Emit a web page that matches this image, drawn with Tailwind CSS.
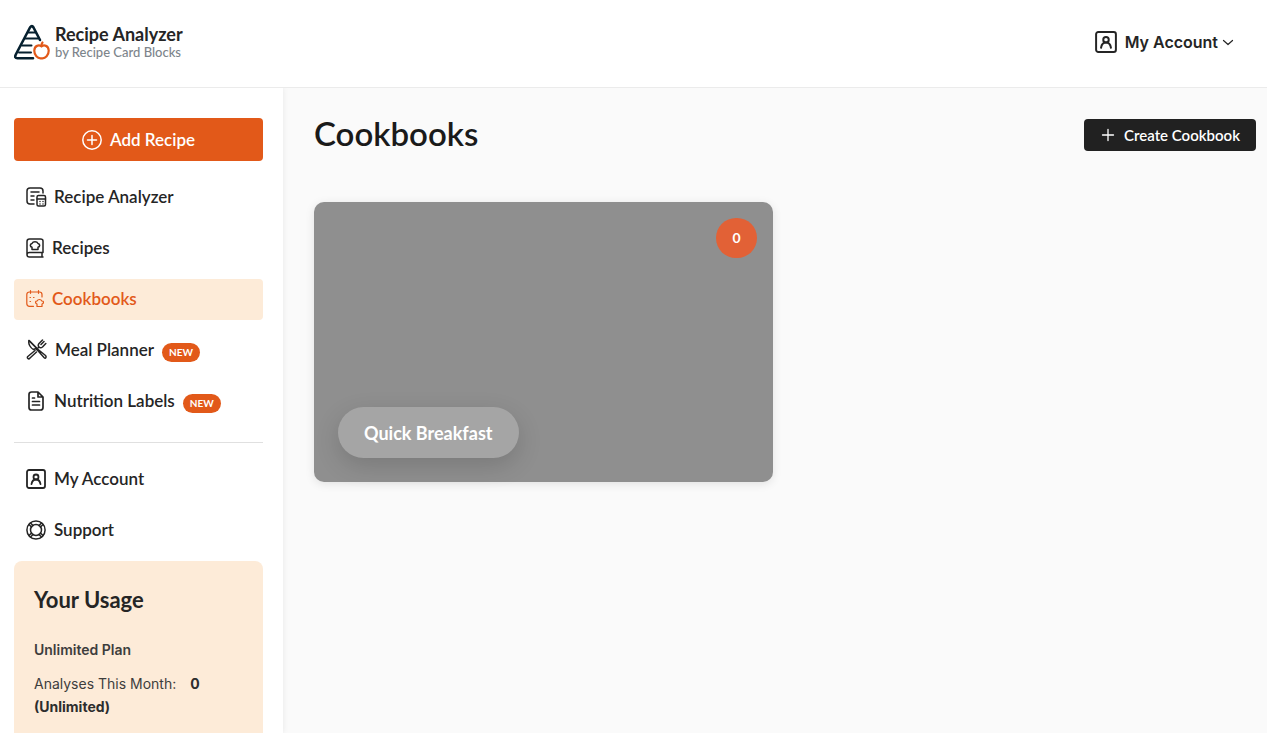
<!DOCTYPE html>
<html lang="en">

<head>
    <meta charset="UTF-8">
    <meta name="viewport" content="width=device-width, initial-scale=1.0">
    <title>Cookbooks - Recipe Analyzer</title>
    <script src="https://cdn.jsdelivr.net/npm/@tailwindcss/browser@4"></script>
</head>

<body class="flex flex-col min-h-screen bg-white text-[#252525] font-['Lato','Liberation_Sans',sans-serif]">
    <header class="flex items-center justify-between h-22 pl-[14px] pr-[33px] pb-[3px] border-b border-[#ebebeb]">
        <a href="#" class="flex items-center gap-[5px]">
            <svg class="w-9 h-9" viewBox="0 0 36 36" fill="none" stroke="#06202f" stroke-width="2.6" stroke-linecap="round" stroke-linejoin="round">
                <path d="M26 16 19.500 3.500Q18 .8 16 3.500L1.800 30.500Q0 34.200 3.500 34.200H19" />
                <path d="M14.500 8.500H21M11 14.500H24M8 21.500H17.500M5 28.500H17" stroke-width="2" />
                <g stroke="#e25919" stroke-width="2.2">
                    <path d="M27.500 22.500C25 20.500 20.600 21.500 20.300 26.500 20.200 31 23.500 35 27.500 34.300 31.500 35 34.800 31 34.700 26.500 34.400 21.500 30 20.500 27.500 22.500Z" />
                    <path d="M27.500 22Q27.300 20 28.500 18.500" />
                </g>
            </svg>
            <span>
                <span class="block text-lg leading-5 font-bold">Recipe Analyzer</span>
                <span class="block text-[13px] leading-4 font-medium text-[#7d858b]">by Recipe Card Blocks</span>
            </span>
        </a>
        <button type="button" class="flex items-center gap-1 font-['Inter',sans-serif] text-base font-semibold">
            <svg class="w-[22px] h-[22px] mr-1" viewBox="2 2 20 20" fill="none" stroke="currentColor" stroke-width="1.800" stroke-linecap="round">
                <rect x="3" y="3" width="18" height="18" rx="2" />
                <circle cx="12" cy="10" r="2.500" />
                <path d="M7.500 17.200C8 14.200 9.500 12.500 12 12.500S16 14.200 16.500 17.200" />
            </svg>
            My Account
            <svg class="w-3 h-3" viewBox="0 0 12 12" fill="none" stroke="currentColor" stroke-width="1.200" stroke-linecap="round" stroke-linejoin="round">
                <path d="M1.500 4.500 6 8.500 10.500 4.500" />
            </svg>
        </button>
    </header>

    <div class="flex flex-1">
        <aside class="flex flex-col w-[283px] shrink-0 pl-[14px] pr-5 pt-[30px] shadow-[0_0_6px_rgba(0,0,0,0.08)] z-10 [clip-path:inset(0_-8px_0_0)]">
            <button type="button" class="flex items-center justify-center gap-2 h-[43px] mb-4 rounded bg-[#e25919] text-white text-[17px] font-semibold">
                <svg class="w-5 h-5" viewBox="0 0 20 20" fill="none" stroke="currentColor" stroke-width="1.500" stroke-linecap="round">
                    <circle cx="10" cy="10" r="9.200" />
                    <path d="M10 5.500V14.500M5.500 10H14.500" />
                </svg>
                Add Recipe
            </button>

            <nav class="flex flex-col gap-[10px] pb-5 border-b border-[#e0e0e0] text-[17px] font-semibold">
                <a href="#" class="flex items-center gap-[7px] h-[41px] px-3 pb-[2px] rounded">
                    <svg class="w-[21px] h-5" viewBox="0 0 21 20" fill="none" stroke="currentColor" stroke-width="1.500" stroke-linecap="round" stroke-linejoin="round">
                        <path d="M8 17H4Q1 17 1 14V4Q1 1 4 1H14Q17 1 17 4V6M5 5H13M5 9H8M5 13H8" />
                        <rect x="11" y="8.500" width="8.500" height="10.500" rx="1.500" />
                        <path d="M11 12H19.500M14 14.500V14.600M17 14.500V14.600M14 17V17.100M17 17V17.100" />
                    </svg>
                    Recipe Analyzer
                </a>
                <a href="#" class="flex items-center gap-2 h-[41px] px-3 pb-[2px] rounded">
                    <svg class="w-[18px] h-5" viewBox="0 0 18 20" fill="none" stroke="currentColor" stroke-width="1.500" stroke-linecap="round" stroke-linejoin="round">
                        <path d="M17 19H3.500Q1 19 1 16.700V3.500Q1 1 3.500 1H14.500Q17 1 17 3V14.500H3.500Q1 14.500 1 16.700M16 15V18.500" />
                        <path d="M6 11.500V9.300C4 8.700 3.500 6 6 5.500 7 3.300 11 3.300 12 5.500 14.500 6 14 8.700 12 9.300V11.500Z" />
                    </svg>
                    Recipes
                </a>
                <a href="#" aria-current="page" class="flex items-center gap-2 h-[41px] px-3 pb-[2px] rounded bg-[#fdebd8] text-[#e25919]">
                    <svg class="w-[18px] h-[18px]" viewBox="0 0 18 18" fill="none" stroke="currentColor" stroke-width="1.200" stroke-linecap="round" stroke-linejoin="round">
                        <path d="M7.500 16.300H3.500Q.8 16.300 .8 13.500V4.500Q.8 2 3.500 2H13.500Q16 2 16 4.500V7M4.500 .7V3.300M12.500 .7V3.300M4 7.500H4.500M7.500 7.500H8M4 11.500H4.500" />
                        <path d="M11 16.500V14C8.800 13.300 9.500 10.800 11 11 12 9 15 9 15.800 11 18 10.800 18 13.500 16 14V16.500Z" />
                    </svg>
                    Cookbooks
                </a>
                <a href="#" class="flex items-center gap-2 h-[41px] px-3 pb-[2px] rounded">
                    <svg class="w-[21px] h-[21px]" viewBox="0 0 21 21" fill="none" stroke="currentColor" stroke-width="1.500" stroke-linecap="round" stroke-linejoin="round">
                        <path d="M3 1.500C2 5 4.500 9 7.500 10.500L10 9.500 18 18.500Q19.500 20 20 18.200 20.300 17.500 19.500 16.500L11.500 10Z" />
                        <path d="M3 1.500 11.500 10M16.500 1 13 4.500Q11.500 6.500 13 8L10.500 10.500M18 2.500 15 5.500M19.800 4.500 16.500 8Q14.500 9.500 13 8M9 11.500 1.800 17.500Q.8 19 2 19.700 3 20.300 4 19L10.500 13" />
                    </svg>
                    Meal Planner
                    <span class="flex items-center h-[19px] px-[7px] mt-[5px] rounded-full bg-[#e25919] text-white text-[10px] font-bold">NEW</span>
                </a>
                <a href="#" class="flex items-center gap-2 h-[41px] px-3 pb-[2px] rounded">
                    <svg class="w-5 h-5" viewBox="0 0 20 20" fill="none" stroke="currentColor" stroke-width="1.700" stroke-linecap="round" stroke-linejoin="round">
                        <path d="M12 1H5.500Q3 1 3 3.500V16.500Q3 19 5.500 19H14.500Q17 19 17 16.500V6ZV6H17M6.500 7H8.500M6.500 10.500H13.500M6.500 14H13.500" />
                    </svg>
                    Nutrition Labels
                    <span class="flex items-center h-[19px] px-[7px] mt-[5px] rounded-full bg-[#e25919] text-white text-[10px] font-bold">NEW</span>
                </a>
            </nav>

            <nav class="flex flex-col gap-[10px] pt-4 mb-[10px] text-[17px] font-semibold">
                <a href="#" class="flex items-center gap-2 h-[41px] px-3 pb-[2px] rounded">
                    <svg class="w-5 h-5" viewBox="2 2 20 20" fill="none" stroke="currentColor" stroke-width="1.800" stroke-linecap="round">
                        <rect x="3" y="3" width="18" height="18" rx="2" />
                        <circle cx="12" cy="10" r="2.500" />
                        <path d="M7.500 17.200C8 14.200 9.500 12.500 12 12.500S16 14.200 16.500 17.200" />
                    </svg>
                    My Account
                </a>
                <a href="#" class="flex items-center gap-2 h-[41px] px-3 pb-[2px] rounded">
                    <svg class="w-5 h-5" viewBox="0 0 20 20" fill="none" stroke="currentColor" stroke-width="1.500" stroke-linecap="round">
                        <circle cx="10" cy="10" r="9.100" />
                        <circle cx="10" cy="10" r="5.500" />
                        <path d="M3 4.500 5.500 7M4.500 3 7 5.500M17 4.500 14.500 7M15.500 3 13 5.500M3 15.500 5.500 13M4.500 17 7 14.500M17 15.500 14.500 13M15.500 17 13 14.500" />
                    </svg>
                    Support
                </a>
            </nav>

            <section class="flex-1 px-5 pt-6 rounded-t-lg bg-[#fdebd8] text-[#3d3d3d]">
                <h2 class="text-[22px] leading-[30px] font-bold text-[#252525]">Your Usage</h2>
                <div class="mt-[23px] font-['Inter',sans-serif] text-sm leading-[23px]">
                    <p class="font-semibold">Unlimited Plan</p>
                    <p class="mt-[11px]">Analyses This Month: <strong class="ml-[10px] font-bold text-[#2d2d2d]">0</strong></p>
                    <p class="font-bold text-[#2d2d2d]">(Unlimited)</p>
                </div>
            </section>
        </aside>

        <main class="flex-1 bg-[#fafafa] pl-[31px] pr-[11px] pt-6">
            <div class="flex items-center justify-between h-[46px]">
                <h1 class="pb-[3px] text-[33px] font-semibold text-[#1a1a1a]">Cookbooks</h1>
                <button type="button" class="flex items-center gap-2 h-8 px-4 rounded bg-[#212121] text-white text-[15px] font-semibold">
                    <svg class="w-4 h-4" viewBox="0 0 16 16" fill="none" stroke="currentColor" stroke-width="1.300" stroke-linecap="round">
                        <path d="M8 2.500V13.500M2.500 8H13.500" />
                    </svg>
                    Create Cookbook
                </button>
            </div>

            <div class="grid grid-cols-2 gap-6 mt-11">
                <a href="#" class="flex flex-col justify-between h-70 pt-4 pr-4 pb-6 pl-6 rounded-[10px] bg-[#8f8f8f] text-white shadow-[0_2px_10px_rgba(0,0,0,0.1)]">
                    <span class="flex items-center justify-center self-end w-[41px] h-10 rounded-full bg-[#e26136] text-sm font-bold">0</span>
                    <span class="flex items-center self-start h-[51px] px-[26px] rounded-full bg-[#a5a5a5] text-lg font-bold shadow-[0_8px_24px_rgba(0,0,0,0.15)]">Quick Breakfast</span>
                </a>
            </div>
        </main>
    </div>
</body>

</html>
